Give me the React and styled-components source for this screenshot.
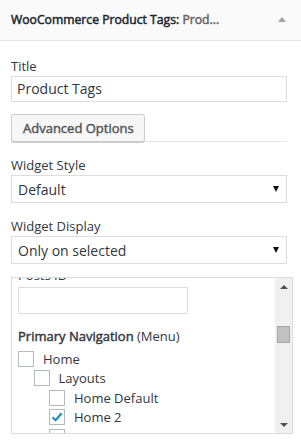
import React, { useEffect, useRef } from "react";
import styled, { createGlobalStyle } from "styled-components";

const GlobalStyle = createGlobalStyle`
  * { box-sizing: border-box; }
  body {
    margin: 0;
    background: #ffffff;
    font-family: "Open Sans", "Liberation Sans", sans-serif;
    color: #23282d;
  }
`;

// Open Sans semibold is not installed: a thin stroke on the regular face keeps its widths
const semibold = `
  font-weight: 400;
  -webkit-text-stroke: 0.45px currentColor;
`;

const Widget = styled.div`
  width: 301px;
  height: 442px;
  background: #ffffff;
  overflow: hidden;
`;

const Header = styled.div`
  height: 41px;
  display: flex;
  align-items: center;
  justify-content: space-between;
  padding: 0 15px 0 11px;
  background: #fafafa;
  border-bottom: 1px solid #e5e5e5;
`;

const HeaderTitle = styled.h3`
  margin: 0;
  font-size: 12.2px;
  ${semibold}
  -webkit-text-stroke-width: 0.5px;
  line-height: 18px;
  color: #23282d;
  white-space: nowrap;
`;

const Muted = styled.span`
  color: #666666;
`;

const Toggle = styled.span`
  width: 0;
  height: 0;
  border-left: 4px solid transparent;
  border-right: 4px solid transparent;
  border-bottom: 5px solid #a0a5aa;
  margin-top: -2px;
`;

const Body = styled.div`
  padding: 16px 0 0 11px;
  display: flex;
  flex-direction: column;
`;

const Field = styled.div`
  width: 276px;
  margin-bottom: ${(p) => p.$gap || 0}px;
`;

const Label = styled.div`
  font-size: 13px;
  line-height: 18px;
  color: #32373c;
  margin-bottom: 1px;
`;

const TextInput = styled.div`
  height: 26px;
  border: 1px solid #dddddd;
  padding: 0 6px 0 5px;
  font-size: 14px;
  line-height: 24px;
  color: #32373c;
`;

const Select = styled.div`
  height: 28px;
  border: 1px solid #dddddd;
  padding: 0 6px 0 6px;
  display: flex;
  align-items: center;
  justify-content: space-between;
  font-size: 14px;
  color: #32373c;
`;

const Caret = styled.span`
  width: 0;
  height: 0;
  border-left: 3.5px solid transparent;
  border-right: 3.5px solid transparent;
  border-top: 6px solid #111111;
  margin-right: 1px;
`;

const ButtonRow = styled.div`
  display: flex;
  align-items: flex-end;
  width: 276px;
  margin-bottom: 14px;
`;

const Button = styled.button`
  height: 28px;
  margin-top: -1px;
  padding: 0 10px 0 11px;
  border: 1px solid #cccccc;
  border-radius: 3px;
  background: #f7f7f7;
  box-shadow: 0 1px 0 #cccccc;
  font-family: "Open Sans", "Liberation Sans", sans-serif;
  font-size: 13px;
  ${semibold}
  color: #555555;
  line-height: 26px;
`;

const Rule = styled.div`
  flex: 1;
  border-bottom: 1px solid #e5e5e5;
`;

const ScrollBox = styled.div`
  width: 282px;
  height: 157px;
  border: 1px solid #dddddd;
  display: flex;
`;

const ScrollContent = styled.div`
  flex: 1;
  overflow: hidden;
`;

const Inner = styled.div`
  padding: 8px 0 0 6px;
`;

const PostsInput = styled.div`
  width: 170px;
  height: 27px;
  border: 1px solid #dddddd;
  margin: 3px 0 12px;
`;

const MenuTitle = styled.div`
  font-size: 13px;
  ${semibold}
  line-height: 20px;
  color: #32373c;
  margin-bottom: 3px;
`;

const MenuNote = styled.span`
  -webkit-text-stroke: 0;
`;

const Item = styled.label`
  display: flex;
  align-items: center;
  height: 19.5px;
  padding-left: ${(p) => p.$level * 15.5}px;
  font-size: 13px;
  color: #32373c;
`;

const Box = styled.span`
  width: 16px;
  height: 16px;
  flex: none;
  border: 1px solid #b4b9be;
  background: #ffffff;
  margin-right: 9px;
  display: flex;
  align-items: center;
  justify-content: center;
`;

const Scrollbar = styled.div`
  width: 17px;
  background: #f0f0f0;
  display: flex;
  flex-direction: column;
  align-items: center;
`;

const Arrow = styled.div`
  height: 17px;
  display: flex;
  align-items: center;
  justify-content: center;
  &::after {
    content: "";
    border-left: 4px solid transparent;
    border-right: 4px solid transparent;
    ${(p) =>
      p.$down
        ? "border-top: 4px solid #505050;"
        : "border-bottom: 4px solid #505050;"}
  }
`;

const Track = styled.div`
  flex: 1;
  width: 100%;
  padding: 31px 2px 0;
`;

const Thumb = styled.div`
  height: 17px;
  background: #c1c1c1;
  border: 1px solid #a8a8a8;
`;

const menu = [
  { label: "Home", level: 0 },
  { label: "Layouts", level: 1 },
  { label: "Home Default", level: 2 },
  { label: "Home 2", level: 2, checked: true },
  { label: "Home 3", level: 2 },
  { label: "Home 4", level: 2 },
];

function Check() {
  return (
    <svg width="14" height="14" viewBox="0 0 14 14">
      <path
        d="M2.5 7.2 L5.6 10.2 L11.6 3.2"
        fill="none"
        stroke="#1e8cbe"
        strokeWidth="2.2"
      />
    </svg>
  );
}

export default function App() {
  const scrollRef = useRef(null);
  useEffect(() => {
    if (scrollRef.current) scrollRef.current.scrollTop = 20;
  }, []);

  return (
    <Widget>
      <GlobalStyle />
      <Header>
        <HeaderTitle>
          WooCommerce Product Tags: <Muted>Prod...</Muted>
        </HeaderTitle>
        <Toggle />
      </Header>
      <Body>
        <Field $gap={13}>
          <Label>Title</Label>
          <TextInput>Product Tags</TextInput>
        </Field>
        <ButtonRow>
          <Button type="button">Advanced Options</Button>
          <Rule />
        </ButtonRow>
        <Field $gap={14}>
          <Label>Widget Style</Label>
          <Select>
            Default
            <Caret />
          </Select>
        </Field>
        <Field $gap={13}>
          <Label>Widget Display</Label>
          <Select>
            Only on selected
            <Caret />
          </Select>
        </Field>
        <ScrollBox>
          <ScrollContent ref={scrollRef}>
            <Inner>
              <Label>Posts ID</Label>
              <PostsInput />
              <MenuTitle>
                Primary Navigation <MenuNote>(Menu)</MenuNote>
              </MenuTitle>
              {menu.map((m) => (
                <Item key={m.label} $level={m.level}>
                  <Box>{m.checked && <Check />}</Box>
                  {m.label}
                </Item>
              ))}
            </Inner>
          </ScrollContent>
          <Scrollbar>
            <Arrow />
            <Track>
              <Thumb />
            </Track>
            <Arrow $down />
          </Scrollbar>
        </ScrollBox>
      </Body>
    </Widget>
  );
}
